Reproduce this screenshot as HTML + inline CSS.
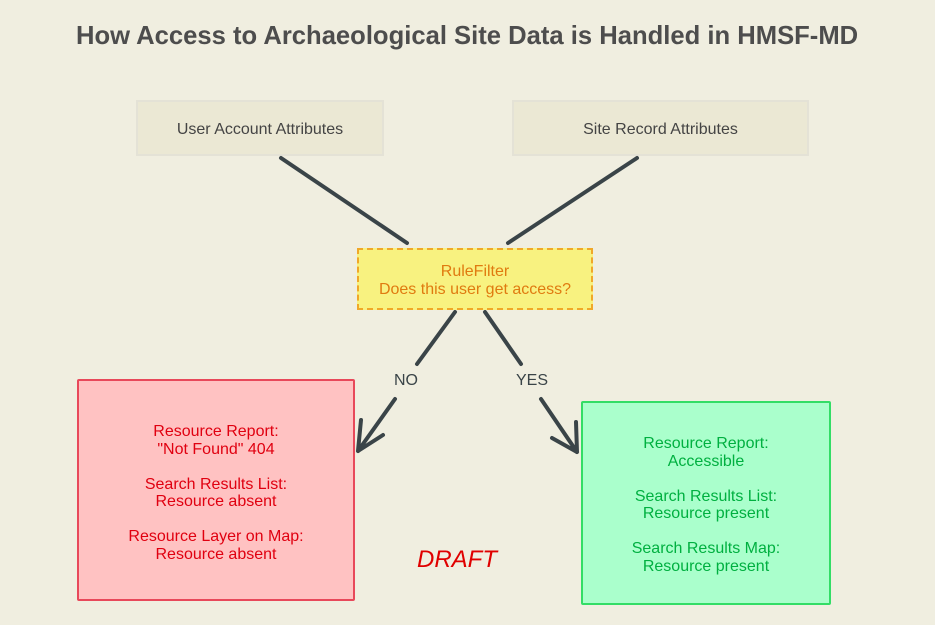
<!DOCTYPE html>
<html><head><meta charset="utf-8"><style>
body{margin:0;width:935px;height:625px;background:#f0eee0;position:relative;overflow:hidden;font-family:"Liberation Sans",sans-serif}
.a{position:absolute;box-sizing:border-box;display:flex;align-items:center;justify-content:center;text-align:center}
.t{position:absolute;left:0;top:20px;width:935px;text-align:center;font-weight:bold;font-size:26px;color:#4d4d4d}
.t span{display:inline-block;transform:scaleX(0.985)}
.attr{background:#ebe8d4;border:2px solid #e4e2d6;color:#444;font-size:16px}
</style></head><body>
<div class="t"><span>How Access to Archaeological Site Data is Handled in HMSF-MD</span></div>
<div class="a attr" style="left:136px;top:100px;width:248px;height:56px;padding-top:3px">User Account Attributes</div>
<div class="a attr" style="left:512px;top:100px;width:297px;height:56px;padding-top:3px">Site Record Attributes</div>
<svg style="position:absolute;left:0;top:0" width="935" height="625" fill="none" stroke="#3a4448" stroke-width="4" stroke-linecap="round">
<path d="M281 158 L407 243 M637 158 L508 243 M455 312 L417 364 M485 312 L521 364 M395 399 L358 451 M358 451 L361 420 M358 451 L383 435 M541 399 L577 452 M577 452 L576 422 M577 452 L552 438"/>
</svg>
<div class="a" style="left:357px;top:248px;width:236px;height:62px;background:#f8f280;border:2px dashed #f0a828;color:#e07b10;font-size:16px;line-height:18px;padding-top:4px">RuleFilter<br>Does this user get access?</div>
<div style="position:absolute;left:394px;top:372px;font-size:16px;color:#3a4448">NO</div>
<div style="position:absolute;left:516px;top:372px;font-size:16px;color:#3a4448">YES</div>
<div class="a" style="left:77px;top:379px;width:278px;height:222px;background:#ffc2c2;border:2px solid #e8485a;border-radius:2px;color:#e00010;font-size:16px;line-height:17.5px;padding-top:6px">Resource Report:<br>"Not Found" 404<br><br>Search Results List:<br>Resource absent<br><br>Resource Layer on Map:<br>Resource absent</div>
<div class="a" style="left:581px;top:401px;width:250px;height:204px;background:#aaffcc;border:2px solid #33dd66;border-radius:2px;color:#00b040;font-size:16px;line-height:17.5px;padding-top:4px">Resource Report:<br>Accessible<br><br>Search Results List:<br>Resource present<br><br>Search Results Map:<br>Resource present</div>
<div style="position:absolute;left:417px;top:546px;font-size:24px;font-style:italic;color:#e00000">DRAFT</div>
</body></html>
